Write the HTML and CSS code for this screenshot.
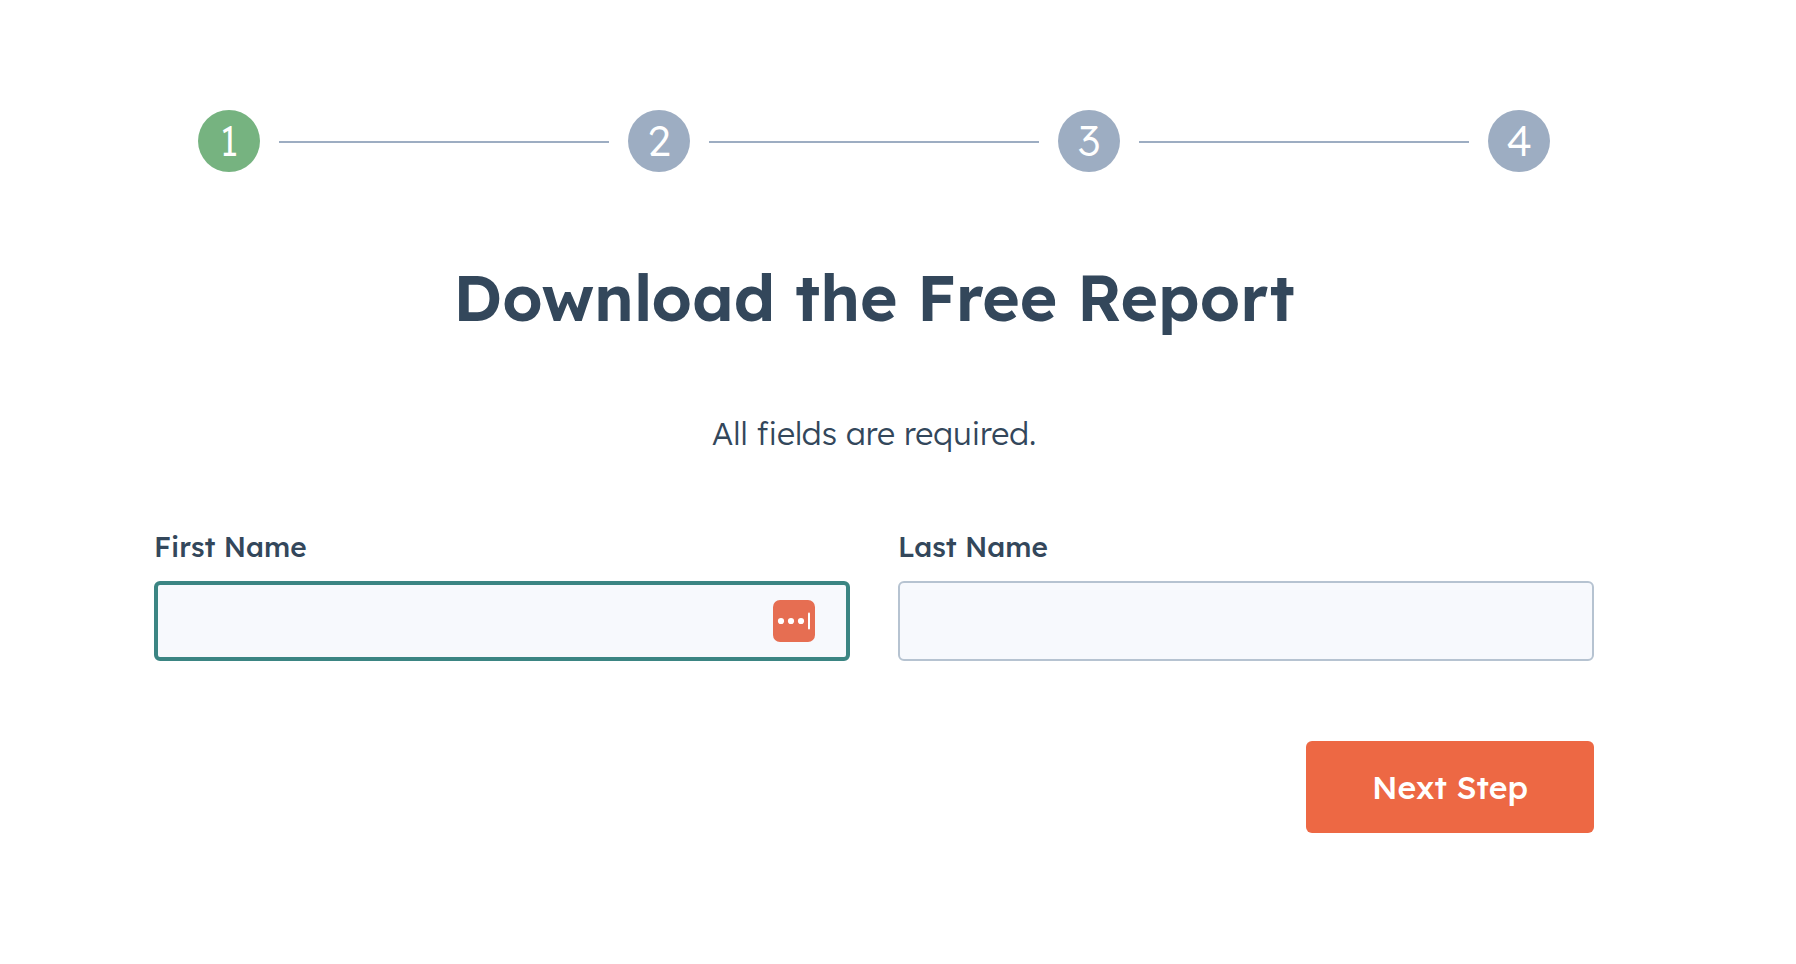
FILE: index.html
```html
<!DOCTYPE html>
<html lang="en">
<head>
  <meta charset="UTF-8">
  <meta name="viewport" content="width=device-width, initial-scale=1.0">
  <title>Download the Free Report</title>
  <link rel="stylesheet" href="styles.css">
</head>
<body>
  <main class="form-page">
    <ol class="steps">
      <li class="step active">1</li>
      <li class="line"></li>
      <li class="step">2</li>
      <li class="line"></li>
      <li class="step">3</li>
      <li class="line"></li>
      <li class="step">4</li>
    </ol>

    <h1>Download the Free Report</h1>
    <p class="note">All fields are required.</p>

    <form>
      <div class="fields">
        <div class="field">
          <label for="firstname">First Name</label>
          <div class="input-wrap">
            <input class="focused" type="text" id="firstname" name="firstname">
            <!-- password manager badge -->
            <svg class="badge" viewBox="0 0 42 42" aria-hidden="true">
              <rect width="42" height="42" rx="7" fill="#e66e52"/>
              <circle cx="8" cy="21" r="3.1" fill="#fff"/>
              <circle cx="18" cy="21" r="3.1" fill="#fff"/>
              <circle cx="28" cy="21" r="3.1" fill="#fff"/>
              <rect x="35" y="12.5" width="2" height="17" rx="1" fill="#fff"/>
            </svg>
          </div>
        </div>
        <div class="field">
          <label for="lastname">Last Name</label>
          <div class="input-wrap">
            <input type="text" id="lastname" name="lastname">
          </div>
        </div>
      </div>
      <div class="actions">
        <button type="button">Next Step</button>
      </div>
    </form>
  </main>
</body>
</html>
```
FILE: styles.css
```css
* {
  box-sizing: border-box;
}
body {
  margin: 0;
  background: #fff;
  color: #33475b;
  font-family: Lexend, Inter, sans-serif;
}
.form-page {
  padding: 110px 202px 110px 154px;
}
.steps {
  display: flex;
  align-items: center;
  gap: 19px;
  list-style: none;
  margin: 0;
  padding: 0 44px;
}
.step {
  width: 62px;
  height: 62px;
  border-radius: 50%;
  background: #9dadc2;
  color: #fff;
  font-size: 42px;
  font-weight: 300;
  line-height: 62px;
  text-align: center;
}
.step.active {
  background: #76b380;
}
.line {
  flex: 1;
  height: 2px;
  margin-top: 2px;
  background: #9dadc2;
}
h1 {
  margin: 84px 0 0;
  font-size: 64px;
  font-weight: 600;
  line-height: 82px;
  text-align: center;
}
.note {
  margin: 71px 0 0;
  font-size: 32px;
  font-weight: 300;
  line-height: 48px;
  text-align: center;
}
.fields {
  display: flex;
  gap: 48px;
  margin-top: 70px;
}
.field {
  flex: 1;
}
label {
  display: block;
  margin-bottom: 14px;
  font-size: 28px;
  font-weight: 500;
  line-height: 40px;
}
.input-wrap {
  position: relative;
}
input {
  display: block;
  width: 100%;
  height: 80px;
  padding: 0 20px;
  border: 2px solid #b6c3d1;
  border-radius: 6px;
  background: #f7f9fd;
  color: #33475b;
  font: inherit;
  font-size: 32px;
  outline: none;
}
input.focused,
input:focus {
  border: 4px solid #3b8583;
}
.badge {
  position: absolute;
  top: 19px;
  right: 35px;
  width: 42px;
  height: 42px;
}
.actions {
  display: flex;
  justify-content: flex-end;
  margin-top: 80px;
}
button {
  min-width: 288px;
  height: 92px;
  border: none;
  border-radius: 6px;
  background: #ed6844;
  color: #fff;
  font: inherit;
  font-size: 32px;
  font-weight: 500;
  cursor: pointer;
}
```
